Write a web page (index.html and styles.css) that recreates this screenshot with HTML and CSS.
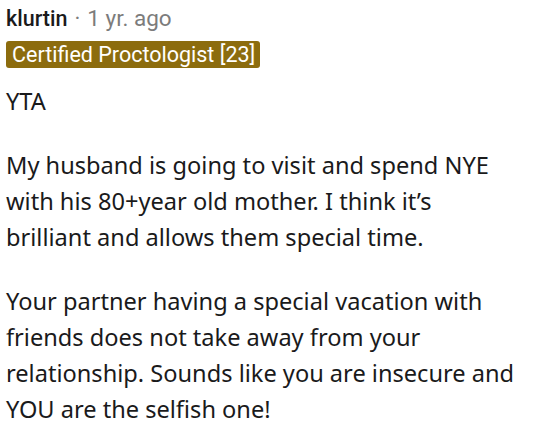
FILE: index.html
```html
<!DOCTYPE html>
<html>
<head>
<meta charset="utf-8">
<link rel="stylesheet" href="styles.css">
</head>
<body>
<div class="comment">
  <div class="meta"><span class="author">klurtin</span><span class="sep">·</span><span class="time">1 yr. ago</span></div>
  <div class="flair-row"><span class="flair">Certified Proctologist [23]</span></div>
  <div class="body">
    <p>YTA</p>
    <p>My husband is going to visit and spend NYE with his 80+year old mother. I think it’s brilliant and allows them special time.</p>
    <p>Your partner having a special vacation with friends does not take away from your relationship. Sounds like you are insecure and YOU are the selfish one!</p>
  </div>
</div>
</body>
</html>
```
FILE: styles.css
```css
html, body { margin: 0; padding: 0; background: #fff; }
.comment { padding: 4px 24px 0 6px; }
.meta { font-family: Roboto, "Noto Sans", sans-serif; font-size: 22.5px; line-height: 28px; color: #7c7c7c; display: flex; align-items: baseline; }
.author { font-weight: 500; font-size: 21.5px; color: #1a1a1b; }
.sep { margin: 0 7px 0 7px; }
.flair-row { margin-top: 8px; height: 27px; display: flex; }
.flair { display: inline-block; background: #8c6c0e; color: #fff; font-family: Roboto, sans-serif; font-size: 21.5px; line-height: 27px; padding: 0 5px 0 6px; border-radius: 3px; }
.body { font-family: "Noto Sans", sans-serif; font-size: 23.6px; line-height: 36px; color: #1a1a1b; margin-top: 15px; }
.body p { margin: 0 0 28px 0; }
.body p:last-child { margin-bottom: 0; }
```
